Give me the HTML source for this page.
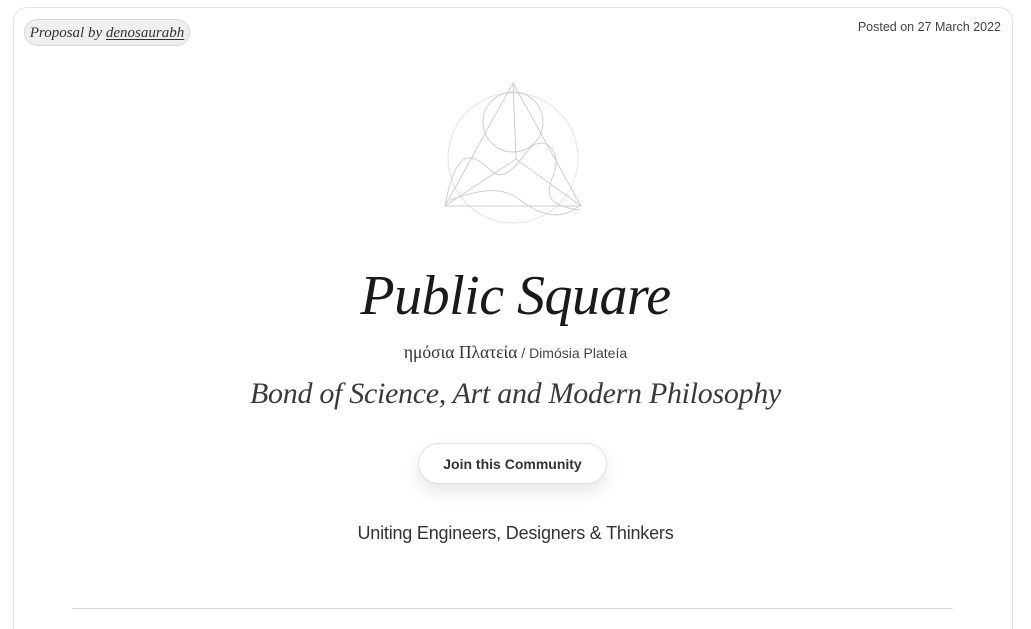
<!DOCTYPE html>
<html><head><meta charset="utf-8"><style>
html,body{margin:0;padding:0;background:#fff;width:1031px;height:629px;overflow:hidden;font-family:"Liberation Sans",sans-serif}
.wrap{position:relative;width:1031px;height:629px;overflow:hidden}
.card{position:absolute;left:13px;top:7px;width:1000px;height:622px;box-sizing:border-box;border:1px solid #e2e2e2;border-bottom:none;border-radius:14px 14px 0 0;background:#fff}
.pill{position:absolute;left:24px;top:19px;width:166px;height:27px;border:1px solid #d8d8d8;border-radius:14px;background:#efefef;font-family:"Liberation Serif",serif;font-style:italic;font-size:15px;color:#333;line-height:27px;text-align:center;box-sizing:border-box}
.pill u{text-decoration:underline;text-underline-offset:2px}
.date{position:absolute;right:30px;top:20px;font-size:12.5px;color:#444}
.c{position:absolute;left:0;width:1031px;text-align:center}
.title{top:264px;font-family:"Liberation Serif",serif;font-style:italic;font-size:56px;color:#1a1a1a;letter-spacing:-0.5px}
.greek{top:342px;font-size:14px;color:#444}
.greek span{font-family:"Liberation Serif",serif;font-size:17.5px;color:#333}
.sub{top:377px;font-family:"Liberation Serif",serif;font-style:italic;font-size:30px;color:#3a3a3a;letter-spacing:-0.3px}
.btn{position:absolute;left:418px;top:443px;width:189px;height:41px;border:1px solid #e2e2e2;border-radius:21px;background:#fff;box-shadow:0 8px 16px rgba(0,0,0,.10);font-size:14px;font-weight:bold;color:#333;line-height:41px;text-align:center;box-sizing:border-box}
.unite{top:523px;font-size:18px;color:#333;letter-spacing:-0.2px}
.hr{position:absolute;left:72px;top:608px;width:881px;height:1px;background:#dcdcdc}
</style></head><body><div class="wrap">
<div class="card"></div>
<div class="pill">Proposal by <u>denosaurabh</u></div>
<div class="date">Posted on 27 March 2022</div>
<svg style="position:absolute;left:0;top:0" width="1031" height="629" fill="none" stroke="#cfcfcf" stroke-width="1">
<circle cx="513" cy="158" r="65" stroke="#e4e4e4"/>
<circle cx="513" cy="122" r="30"/>
<path d="M513 83 L445 206 L581 206 Z"/>
<path d="M513 83 L516 159 L445 206 M516 159 L581 206"/>
<path d="M445 206 C455 150 470 150 490 170 C505 185 520 160 530 148 C545 135 560 150 555 170 C548 190 540 205 580 210"/>
<path d="M450 200 C480 190 500 185 520 200 C540 215 560 222 580 205"/>
</svg>
<div class="c title">Public Square</div>
<div class="c greek"><span>ημόσια Πλατεία</span> / Dimósia Plateía</div>
<div class="c sub">Bond of Science, Art and Modern Philosophy</div>
<div class="btn">Join this Community</div>
<div class="c unite">Uniting Engineers, Designers &amp; Thinkers</div>
<div class="hr"></div>
</div></body></html>
